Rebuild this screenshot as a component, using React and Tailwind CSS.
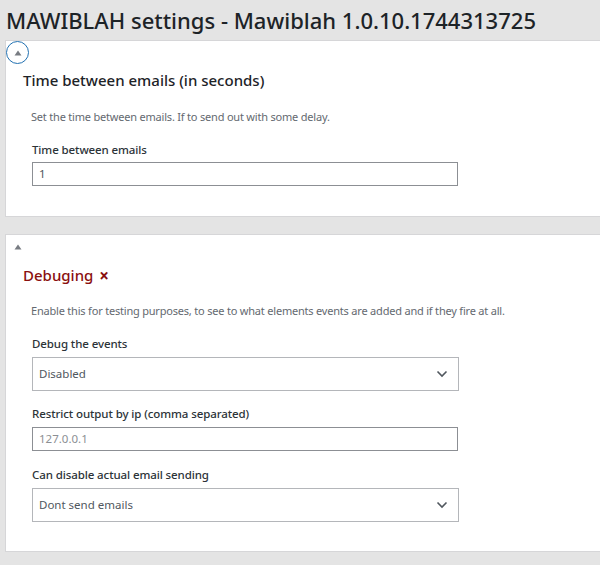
import React from 'react';

const font = { fontFamily: '"Noto Sans", "Open Sans", sans-serif' };

function Toggle({ focused }) {
  return (
    <button
      className={`w-[23px] h-[23px] rounded-full grid place-items-center ${focused ? 'border-[1.5px] border-[#2271b1]' : 'border border-transparent'}`}
    >
      <svg width="8" height="6" viewBox="0 0 8 6">
        <path d="M4 0.5 L7.5 5.5 L0.5 5.5 Z" fill="#787c82" />
      </svg>
    </button>
  );
}

function Chevron() {
  return (
    <svg width="12" height="8" viewBox="0 0 12 8" className="mr-[10px]">
      <path d="M1.5 1.5 L6 6 L10.5 1.5" fill="none" stroke="#50575e" strokeWidth="1.6" />
    </svg>
  );
}

function Label({ children, className = '' }) {
  return (
    <div className={`pl-[26px] text-[11.5px] tracking-[-0.1px] leading-[18px] font-medium text-[#2c3338] ${className}`}>
      {children}
    </div>
  );
}

function TextBox({ value, muted, className = '' }) {
  return (
    <div className={`ml-[26px] w-[426px] h-[24px] border border-[#8c8f94] flex items-center pl-[6px] text-[11.5px] ${muted ? 'text-[#8c8f94]' : 'text-[#50575e]'} ${className}`}>
      {value}
    </div>
  );
}

function SelectBox({ value, className = '' }) {
  return (
    <div className={`ml-[26px] w-[427px] h-[34px] border border-[#b4b6ba] flex items-center justify-between pl-[6px] text-[11.5px] text-[#50575e] ${className}`}>
      <span>{value}</span>
      <Chevron />
    </div>
  );
}

export default function App() {
  return (
    <div className="bg-[#e4e4e4] min-h-[565px] overflow-hidden" style={font}>
      <h1 className="h-[40px] pl-[6px] flex items-center text-[22px] font-medium text-[#1d2327] whitespace-nowrap">
        MAWIBLAH settings - Mawiblah 1.0.10.1744313725
      </h1>

      <div className="ml-[5px] bg-white border border-r-0 border-[#d6d6d8] pb-[30px]">
        <Toggle focused />
        <h2 className="mt-[4px] pl-[17px] text-[15px] leading-[24px] font-medium text-[#1d2327]">
          Time between emails (in seconds)
        </h2>
        <p className="mt-[16px] pl-[25px] text-[11px] tracking-[-0.2px] leading-[18px] text-[#646970]">
          Set the time between emails. If to send out with some delay.
        </p>
        <Label className="mt-[15px]">Time between emails</Label>
        <TextBox value="1" className="mt-[3px]" />
      </div>

      <div className="mt-[17px] ml-[5px] bg-white border border-r-0 border-[#d6d6d8] pb-[29px]">
        <Toggle />
        <h2 className="mt-[5px] pl-[17px] text-[15px] leading-[24px] font-medium text-[#8a0f0f] flex items-center gap-[6px]">
          Debuging <span className="text-[17px] font-bold leading-none">×</span>
        </h2>
        <p className="mt-[15px] pl-[25px] text-[11px] tracking-[-0.2px] leading-[18px] text-[#646970]">
          Enable this for testing purposes, to see to what elements events are added and if they fire at all.
        </p>
        <Label className="mt-[15px]">Debug the events</Label>
        <SelectBox value="Disabled" className="mt-[4px]" />
        <Label className="mt-[14px]">Restrict output by ip (comma separated)</Label>
        <TextBox value="127.0.0.1" muted className="mt-[4px]" />
        <Label className="mt-[15px]">Can disable actual email sending</Label>
        <SelectBox value="Dont send emails" className="mt-[4px]" />
      </div>
    </div>
  );
}
